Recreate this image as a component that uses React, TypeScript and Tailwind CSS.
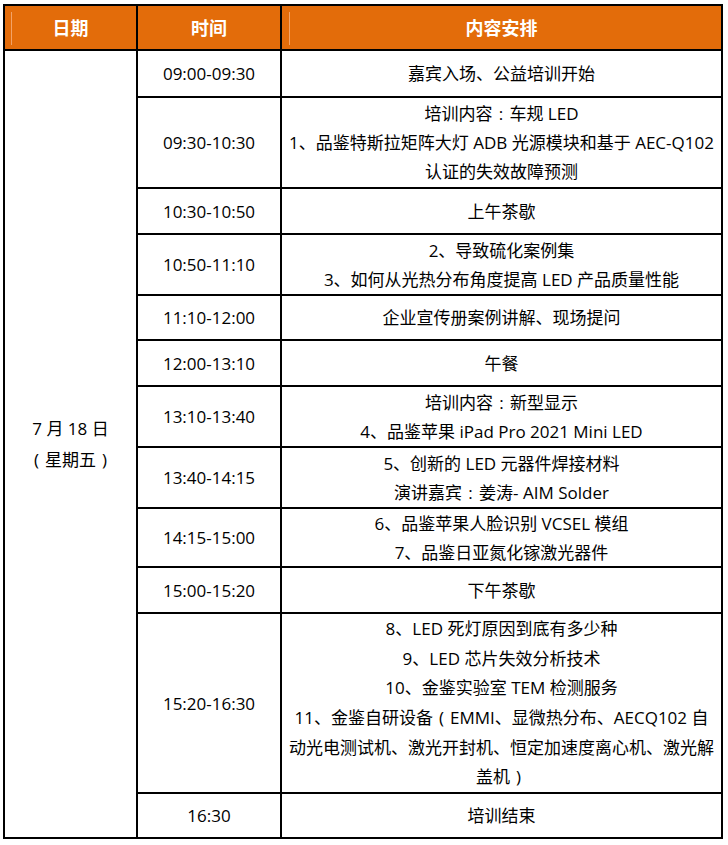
import React from "react";

const Colon = () => <span className="inline-block w-[17px] text-center">:</span>;
const LP = () => <span className="inline-block w-[17px] text-center">(</span>;
const RP = () => <span className="inline-block w-[17px] text-center">)</span>;

type Row = { time: string; lines: React.ReactNode[]; lh: string };

const rows: Row[] = [
  { time: "09:00-09:30", lines: ["嘉宾入场、公益培训开始"], lh: "leading-[29px]" },
  {
    time: "09:30-10:30",
    lines: [
      <>培训内容<Colon />车规 LED</>,
      "1、品鉴特斯拉矩阵大灯 ADB 光源模块和基于 AEC-Q102",
      "认证的失效故障预测",
    ],
    lh: "leading-[29px]",
  },
  { time: "10:30-10:50", lines: ["上午茶歇"], lh: "leading-[29px]" },
  { time: "10:50-11:10", lines: ["2、导致硫化案例集", "3、如何从光热分布角度提高 LED 产品质量性能"], lh: "leading-[29px]" },
  { time: "11:10-12:00", lines: ["企业宣传册案例讲解、现场提问"], lh: "leading-[29px]" },
  { time: "12:00-13:10", lines: ["午餐"], lh: "leading-[29px]" },
  {
    time: "13:10-13:40",
    lines: [<>培训内容<Colon />新型显示</>, "4、品鉴苹果 iPad Pro 2021 Mini LED"],
    lh: "leading-[29px]",
  },
  {
    time: "13:40-14:15",
    lines: ["5、创新的 LED 元器件焊接材料", <>演讲嘉宾<Colon />姜涛- AIM Solder</>],
    lh: "leading-[29px]",
  },
  { time: "14:15-15:00", lines: ["6、品鉴苹果人脸识别 VCSEL 模组", "7、品鉴日亚氮化镓激光器件"], lh: "leading-[29px]" },
  { time: "15:00-15:20", lines: ["下午茶歇"], lh: "leading-[29px]" },
  {
    time: "15:20-16:30",
    lines: [
      "8、LED 死灯原因到底有多少种",
      "9、LED 芯片失效分析技术",
      "10、金鉴实验室 TEM 检测服务",
      <>11、金鉴自研设备<LP />EMMI、显微热分布、AECQ102 自</>,
      "动光电测试机、激光开封机、恒定加速度离心机、激光解",
      <>盖机<RP /></>,
    ],
    lh: "leading-[29.6px]",
  },
  { time: "16:30", lines: ["培训结束"], lh: "leading-[29px]" },
];

const cell =
  "bg-white flex flex-col items-center justify-center text-center text-[17px] text-black overflow-hidden";

export default function App() {
  return (
    <div className="min-h-[845px] w-[728px] bg-white pt-[4px] pl-[3px] font-['Open_Sans','Noto_Sans_CJK_SC',sans-serif]">
      <div className="grid w-[720px] grid-cols-[131px_142px_439px] grid-rows-[43px_45px_89px_44px_59px_43px_44px_59px_59px_57px_44px_178px_43px] gap-[2px] bg-black p-[2px]">
        <div className="relative flex items-center justify-center bg-[#E36C0A] pt-[2px] text-[18px] font-bold text-white">
          <span className="absolute left-[6px] top-[6px] h-[33px] w-px bg-[#F3A368]" />
          日期
        </div>
        <div className="flex items-center justify-center bg-[#E36C0A] pt-[2px] text-[18px] font-bold text-white">
          时间
        </div>
        <div className="relative flex items-center justify-center bg-[#E36C0A] pt-[2px] text-[18px] font-bold text-white">
          <span className="absolute left-[7px] top-[6px] h-[33px] w-px bg-[#F3A368]" />
          内容安排
        </div>

        <div className={`${cell} col-start-1 row-start-2 row-end-[14] leading-[31px]`}>
          <div>7 月 18 日</div>
          <div>
            <LP />星期五<RP />
          </div>
        </div>

        {rows.map((r) => (
          <React.Fragment key={r.time}>
            <div className={`${cell} col-start-2 leading-[29px]`}>{r.time}</div>
            <div className={`${cell} col-start-3 ${r.lh}`}>
              {r.lines.map((l, i) => (
                <div key={i} className="whitespace-nowrap">
                  {l}
                </div>
              ))}
            </div>
          </React.Fragment>
        ))}
      </div>
    </div>
  );
}
